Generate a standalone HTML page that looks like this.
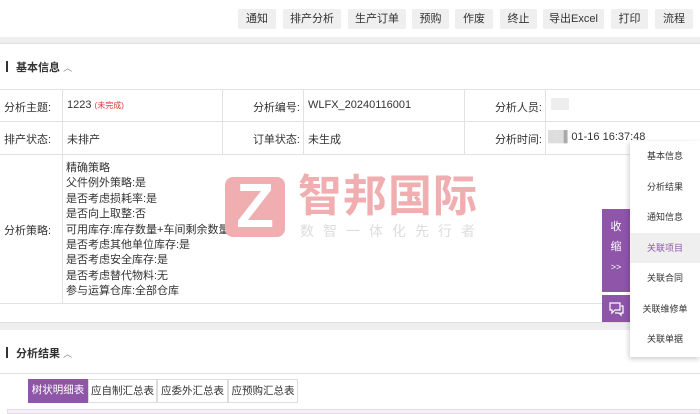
<!DOCTYPE html>
<html><head><meta charset="utf-8"><style>
*{margin:0;padding:0;box-sizing:border-box}
body{width:700px;height:414px;overflow:hidden;background:#fff;font-family:"Liberation Sans","Noto Sans CJK SC",sans-serif;font-size:11px;color:#333;position:relative}
.a{position:absolute}
.btn{position:absolute;top:9px;height:20px;background:#efefef;border-radius:2px;line-height:20px;text-align:center;font-size:11px;color:#333}
.line{position:absolute;background:#e2e2e2}
.lbl{position:absolute;text-align:right;white-space:nowrap}
.menu div{height:30.5px;line-height:30.5px;text-align:center;font-size:9px;color:#333}
</style></head><body>
<div class="btn" style="left:238px;width:38px">通知</div>
<div class="btn" style="left:283px;width:58px">排产分析</div>
<div class="btn" style="left:348px;width:58px">生产订单</div>
<div class="btn" style="left:412px;width:37px">预购</div>
<div class="btn" style="left:455px;width:38px">作废</div>
<div class="btn" style="left:500px;width:37px">终止</div>
<div class="btn" style="left:543px;width:61px">导出Excel</div>
<div class="btn" style="left:611px;width:37px">打印</div>
<div class="btn" style="left:655px;width:38px">流程</div>
<div class="a" style="left:0;top:37px;width:700px;height:7px;background:#eee;border-bottom:1px solid #e0e0e0"></div>
<div class="a" style="left:6px;top:61px;width:2px;height:11px;background:#333"></div>
<div class="a" style="left:16px;top:59px;font-size:11px;font-weight:bold">基本信息 <span style="font-weight:normal;color:#888;font-size:9px">︿</span></div>
<div class="line" style="left:0;top:89px;width:700px;height:1px"></div>
<div class="line" style="left:0;top:121px;width:700px;height:1px"></div>
<div class="line" style="left:0;top:154px;width:700px;height:1px"></div>
<div class="line" style="left:0;top:303px;width:630px;height:1px"></div>
<div class="line" style="left:62px;top:89px;width:1px;height:214px"></div>
<div class="line" style="left:222px;top:89px;width:1px;height:65px"></div>
<div class="line" style="left:303px;top:89px;width:1px;height:65px"></div>
<div class="line" style="left:464px;top:89px;width:1px;height:65px"></div>
<div class="line" style="left:545px;top:89px;width:1px;height:65px"></div>
<div class="a" style="left:4px;top:99px">分析主题:</div>
<div class="a" style="left:67px;top:99px">1223 <span style="color:#d33;font-size:8px">(未完成)</span></div>
<div class="lbl" style="left:222px;width:78px;top:99px">分析编号:</div>
<div class="a" style="left:308px;top:99px">WLFX_20240116001</div>
<div class="lbl" style="left:464px;width:78px;top:99px">分析人员:</div>
<div class="a" style="left:551px;top:98px;width:18px;height:12px;background:#eee"></div>
<div class="a" style="left:4px;top:131px">排产状态:</div>
<div class="a" style="left:67px;top:131px">未排产</div>
<div class="lbl" style="left:222px;width:78px;top:131px">订单状态:</div>
<div class="a" style="left:308px;top:131px">未生成</div>
<div class="lbl" style="left:464px;width:78px;top:131px">分析时间:</div>
<div class="a" style="left:548px;top:131px"><span style="color:#ddd">██</span><span style="color:#aaa">▌</span>01-16 16:37:48</div>
<div class="a" style="left:4px;top:222px">分析策略:</div>
<div class="a" style="left:66px;top:161px;line-height:15.4px">精确策略<br>父件例外策略:是<br>是否考虑损耗率:是<br>是否向上取整:否<br>可用库存:库存数量+车间剩余数量<br>是否考虑其他单位库存:是<br>是否考虑安全库存:是<br>是否考虑替代物料:无<br>参与运算仓库:全部仓库</div>
<div class="a" style="left:225px;top:177px;width:60px;height:60px;background:#f0aeb0;border-radius:8px;color:#fff;font:bold 62px/60px 'Liberation Sans',sans-serif;text-align:center">Z</div>
<div class="a" style="left:298px;top:172px;font-size:44px;line-height:50px;color:#f0aeb0;font-weight:bold;letter-spacing:1px">智邦国际</div>
<div class="a" style="left:300px;top:221px;font-size:14px;color:#ddd;letter-spacing:9px">数智一体化先行者</div>
<div class="a" style="left:0;top:322px;width:700px;height:8px;background:#eee;border-top:1px solid #e0e0e0"></div>
<div class="a" style="left:6px;top:347px;width:2px;height:11px;background:#333"></div>
<div class="a" style="left:16px;top:345px;font-weight:bold">分析结果 <span style="font-weight:normal;color:#888;font-size:9px">︿</span></div>
<div class="line" style="left:0;top:373px;width:700px;height:1px"></div>
<div class="a" style="left:28px;top:379px;height:24px;display:flex;font-size:10.5px;line-height:22px">
<div style="width:60px;background:#8e55a8;color:#fff;text-align:center">树状明细表</div>
<div style="width:69px;border:1px solid #ddd;text-align:center">应自制汇总表</div>
<div style="width:71px;border:1px solid #ddd;text-align:center">应委外汇总表</div>
<div style="width:70px;border:1px solid #ddd;text-align:center">应预购汇总表</div>
</div>
<div class="a" style="left:7px;top:409px;width:693px;height:5px;background:#f5eff7;border:1px solid #e6dcea"></div>
<div class="a" style="left:602px;top:209px;width:28px;height:83px;background:#8e55a8;color:#fff;text-align:center;font-size:11px;line-height:20px;padding-top:8px">收<br>缩<br><span style="font-size:9px">&gt;&gt;</span></div>
<div class="a" style="left:602px;top:295px;width:28px;height:27px;background:#8e55a8">
<svg width="28" height="27" viewBox="0 0 28 27"><path d="M8 8h10v7h-5l-3 3v-3H8z" fill="none" stroke="#fff" stroke-width="1.2"/><path d="M19 11h2v7h-2v2l-2-2h-4" fill="none" stroke="#fff" stroke-width="1.2"/></svg></div>
<div class="a menu" style="left:630px;top:141px;width:70px;height:216px;background:#fff;box-shadow:-1px 2px 5px rgba(0,0,0,.2)">
<div>基本信息</div><div>分析结果</div><div>通知信息</div><div style="background:#efefef;color:#8e55a8">关联项目</div><div>关联合同</div><div>关联维修单</div><div>关联单据</div>
</div>
</body></html>
